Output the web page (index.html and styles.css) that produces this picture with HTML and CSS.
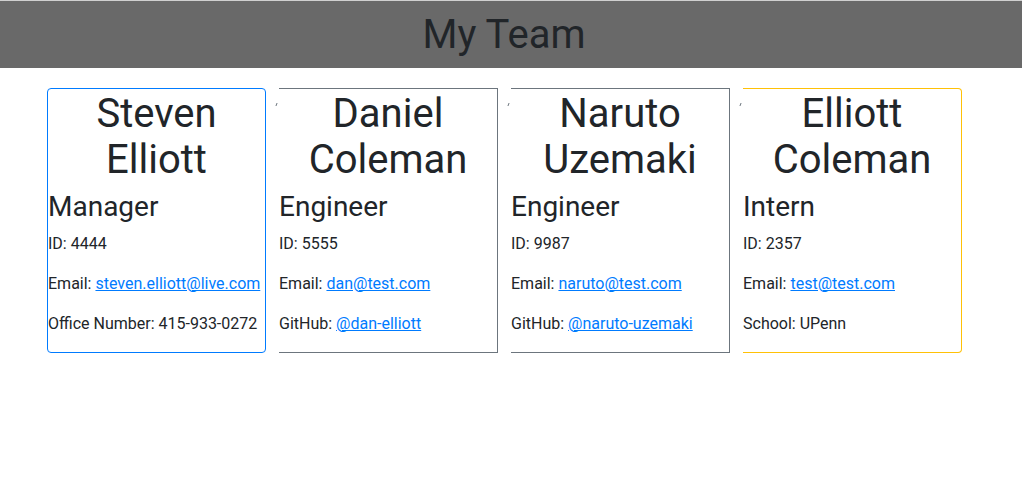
FILE: index.html
```html
<!DOCTYPE html>
<html lang="en">
<head>
<meta charset="utf-8">
<title>My Team</title>
<link rel="stylesheet" href="styles.css">
</head>
<body>
<header class="banner">
  <h1 class="banner-title">My Team</h1>
</header>
<main class="team">
  <div class="card card-manager">
    <h1 class="card-name">Steven Elliott</h1>
    <h3 class="card-role">Manager</h3>
    <p class="card-line">ID: 4444</p>
    <p class="card-line">Email: <a href="#">steven.elliott@live.com</a></p>
    <p class="card-line">Office Number: 415-933-0272</p>
  </div>
  <div class="card card-engineer card-open">
    <h1 class="card-name">Daniel Coleman</h1>
    <h3 class="card-role">Engineer</h3>
    <p class="card-line">ID: 5555</p>
    <p class="card-line">Email: <a href="#">dan@test.com</a></p>
    <p class="card-line">GitHub: <a href="#">@dan-elliott</a></p>
  </div>
  <div class="card card-engineer card-open">
    <h1 class="card-name">Naruto Uzemaki</h1>
    <h3 class="card-role">Engineer</h3>
    <p class="card-line">ID: 9987</p>
    <p class="card-line">Email: <a href="#">naruto@test.com</a></p>
    <p class="card-line">GitHub: <a href="#">@naruto-uzemaki</a></p>
  </div>
  <div class="card card-intern card-open">
    <h1 class="card-name">Elliott Coleman</h1>
    <h3 class="card-role">Intern</h3>
    <p class="card-line">ID: 2357</p>
    <p class="card-line">Email: <a href="#">test@test.com</a></p>
    <p class="card-line">School: UPenn</p>
  </div>
</main>
</body>
</html>
```

FILE: styles.css
```css
* { box-sizing: border-box; }

html, body {
  margin: 0;
  padding: 0;
  background: #fff;
  color: #212529;
  font-family: Roboto, "Liberation Sans", sans-serif;
  font-size: 16px;
  line-height: 1.5;
}

.banner {
  border-top: 1px solid #d0d0d0;
  background: #696969;
  height: 68px;
  padding-right: 14px;
  display: flex;
  justify-content: center;
  align-items: center;
}

.banner-title {
  margin: 0;
  font-size: 40px;
  font-weight: 400;
  line-height: 1.2;
  color: #212529;
}

.team {
  display: flex;
  gap: 13px;
  padding: 20px 0 0 47px;
  align-items: flex-start;
}

.card {
  position: relative;
  width: 219px;
  border: 1px solid #6c757d;
  border-radius: 4px;
  background: #fff;
  padding-top: 2px;
}

.card-manager { border-color: #007bff; }
.card-engineer { border-color: #6c757d; border-radius: 0; }
.card-intern { border-color: #ffc107; border-radius: 0 4px 4px 0; }

.card-open {
  border-left: none;
}

.card-open::before {
  content: "";
  position: absolute;
  left: -3px;
  top: 14px;
  width: 1px;
  height: 3px;
  background: #6c757d;
  transform: skewX(-20deg);
}

.card-name {
  margin: 0 0 7px;
  font-size: 40px;
  font-weight: 400;
  line-height: 1.15;
  text-align: center;
}

.card-role {
  margin: 0 0 8px;
  font-size: 28px;
  font-weight: 400;
  line-height: 1.2;
}

.card-line {
  margin: 0 0 16px;
  font-size: 16px;
  line-height: 24px;
}

.card-line a {
  color: #007bff;
  text-decoration: underline;
}
```
